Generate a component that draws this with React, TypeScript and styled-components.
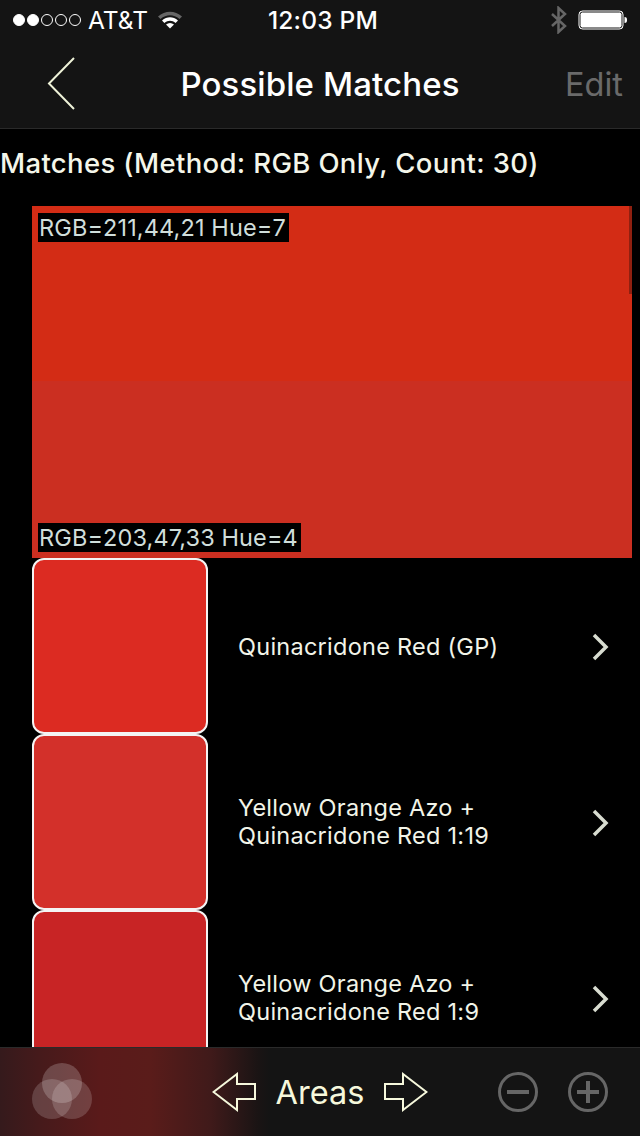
import React from "react";
import styled, { createGlobalStyle } from "styled-components";

const Global = createGlobalStyle`
  html, body { margin: 0; padding: 0; background: #000; }
  body { font-family: Inter, "Liberation Sans", sans-serif; }
`;

const Screen = styled.div`
  width: 640px; height: 1136px; background: #000; display: flex; flex-direction: column; overflow: hidden;
`;
const Header = styled.header`
  height: 128px; flex: none; background: #141414; border-bottom: 1px solid #2a2a2a; display: flex; flex-direction: column;
`;
const StatusBar = styled.div`
  height: 40px; display: grid; grid-template-columns: 1fr auto 1fr; align-items: center; padding: 0 12px 0 13px; color: #fff; font-size: 24.5px;
`;
const StatusLeft = styled.div`display: flex; align-items: center; gap: 7px;`;
const StatusRight = styled.div`display: flex; align-items: center; justify-content: flex-end; gap: 10px;`;
const Dots = styled.div`display: flex; gap: 2px;`;
const Dot = styled.span<{ $on?: boolean }>`
  width: 12px; height: 12px; border-radius: 50%; box-sizing: border-box; border: 1px solid #fff; background: ${p => p.$on ? "#fff" : "transparent"};
`;
const Time = styled.div`font-weight: 500; letter-spacing: 0.2px; margin-left: 5px;`;
const NavBar = styled.nav`
  flex: 1; display: grid; grid-template-columns: 120px 1fr 120px; align-items: center; padding-bottom: 1px;
`;
const BackButton = styled.div`padding-left: 46px; display: flex; align-items: center;`;
const Title = styled.h1`margin: 0; text-align: center; color: #fff; font-size: 33px; font-weight: 500; letter-spacing: 0.1px; white-space: nowrap;`;
const Edit = styled.div`text-align: right; padding: 2px 17px 0 0; color: #6a6a6a; font-size: 32.5px;`;
const Content = styled.main`flex: 1; min-height: 0; overflow: hidden; display: flex; flex-direction: column;`;
const SectionTitle = styled.h2`
  flex: none; margin: 0; height: 77px; box-sizing: border-box; padding: 17px 0 0 0; color: #f4f6ea; font-size: 27.5px; line-height: 34px; font-weight: 500; letter-spacing: 0.35px; white-space: nowrap;
`;
const Comparison = styled.section`
  flex: none; width: 600px; height: 352px; margin-left: 32px; display: flex; flex-direction: column; position: relative;
`;
const Band = styled.div<{ $color: string; $h: number; $end?: boolean }>`
  height: ${p => p.$h}px; background: ${p => p.$color}; box-sizing: border-box; display: flex; padding: ${p => p.$end ? "0 0 6px 6px" : "7px 0 0 6px"};
  align-items: ${p => p.$end ? "flex-end" : "flex-start"};
`;
const ScrollIndicator = styled.div`
  position: absolute; top: 0; right: 0; width: 3px; height: 88px; background: #8f2010;
`;
const Label = styled.span`
  background: #000; color: #d0dedb; font-size: 23.5px; line-height: 29px; padding: 0 3px 0 1px; height: 29px; white-space: nowrap;
  letter-spacing: 0.12px; box-sizing: border-box;
`;
const Row = styled.article`
  flex: none; height: 176px; display: flex; align-items: center; margin-left: 32px; width: 608px;
`;
const Swatch = styled.div<{ $color: string }>`
  width: 176px; height: 176px; box-sizing: border-box; flex: none; background: ${p => p.$color}; border: 2px solid #f4f4f4; border-radius: 12px;
`;
const RowText = styled.div`
  flex: 1; padding: 2px 0 0 30px; color: #f2f4e8; font-size: 23.5px; line-height: 28px; letter-spacing: 0.26px;
`;
const TwoLine = styled(RowText)`
  padding-top: 0;
`;
const Chevron = styled.div`flex: none; width: 24px; margin: 2px 28px 0 0; display: flex; justify-content: center;`;
const TabBar = styled.footer`
  height: 89px; flex: none; box-sizing: border-box; border-top: 1px solid #2a2a2a; display: grid; grid-template-columns: 208px 224px 1fr; align-items: center;
  background: linear-gradient(90deg, #351a1c 0, #461a1b 40px, #5a1a1a 100px, #5a1c1a 150px, #401a1a 210px, #1a1414 258px, #141414 270px);
`;
const Logo = styled.div`padding-left: 32px; display: flex; align-items: center; padding-bottom: 3px;`;
const AreaNav = styled.div`display: flex; align-items: center; justify-content: space-between; padding: 0 4px 0 4px; height: 100%;`;
const AreaLabel = styled.span`color: #f6f8dc; font-size: 32.5px; font-weight: 400;`;
const Zoomers = styled.div`display: flex; gap: 30px; padding-left: 66px;`;

const Chev = () => (
  <svg width="18" height="28" viewBox="0 0 18 28"><path d="M3 2 L15 14 L3 26" fill="none" stroke="#d8dcd0" strokeWidth="3.5" /></svg>
);
const Arrow = ({ flip }: { flip?: boolean }) => (
  <svg width="44" height="40" viewBox="0 0 44 40" style={flip ? { transform: "scaleX(-1)" } : undefined}>
    <path d="M1.5 20 L25 2 V12 H43 V27 H25 V38 Z" fill="none" stroke="#f6f8dc" strokeWidth="2" />
  </svg>
);
const RoundBtn = ({ plus }: { plus?: boolean }) => (
  <svg width="40" height="40" viewBox="0 0 40 40">
    <circle cx="20" cy="20" r="18.5" fill="none" stroke="#666" strokeWidth="3" />
    <path d={plus ? "M9 20 H31 M20 9 V31" : "M9 20 H31"} stroke="#666" strokeWidth="4" fill="none" />
  </svg>
);

export default function App() {
  return (
    <Screen>
      <Global />
      <Header>
        <StatusBar>
          <StatusLeft>
            <Dots><Dot $on /><Dot $on /><Dot /><Dot /><Dot /></Dots>
            <span>AT&amp;T</span>
            <svg width="26" height="20" viewBox="0 0 26 20" style={{ marginLeft: 2 }}>
              <path d="M1 6.5 C8 0 18 0 25 6.5 L22.5 9 C16.5 4 9.5 4 3.5 9 Z" fill="#666" />
              <path d="M5 10.5 C10 6.2 16 6.2 21 10.5 L18.6 13 C15 10 11 10 7.4 13 Z" fill="#fff" />
              <path d="M9 14.5 C11.5 12.5 14.5 12.5 17 14.5 L13 18.5 Z" fill="#fff" />
            </svg>
          </StatusLeft>
          <Time>12:03 PM</Time>
          <StatusRight>
            <svg width="18" height="28" viewBox="0 0 18 28">
              <path d="M2 8 L15 20 L8.5 26 V2 L15 8 L2 20" fill="none" stroke="#666" strokeWidth="2.5" />
            </svg>
            <svg width="50" height="20" viewBox="0 0 50 20">
              <rect x="1" y="1" width="44" height="18" rx="3.5" fill="#fff" stroke="#fff" strokeWidth="1" />
              <rect x="2" y="2" width="42" height="16" rx="2.5" fill="#fff" stroke="#141414" strokeWidth="1" />
              <path d="M46.5 7 C48.5 7 49 8 49 10 C49 12 48.5 13 46.5 13 Z" fill="#fff" />
            </svg>
          </StatusRight>
        </StatusBar>
        <NavBar>
          <BackButton>
            <svg width="30" height="54" viewBox="0 0 30 54"><path d="M28 1 L3 26.5 L28 52" fill="none" stroke="#eef2d8" strokeWidth="2" /></svg>
          </BackButton>
          <Title>Possible Matches</Title>
          <Edit>Edit</Edit>
        </NavBar>
      </Header>
      <Content>
        <SectionTitle>Matches (Method: RGB Only, Count: 30)</SectionTitle>
        <Comparison>
          <Band $color="#d32c15" $h={175}>
            <Label>RGB=211,44,21 Hue=7</Label>
          </Band>
          <Band $color="#cb2f21" $h={177} $end>
            <Label>RGB=203,47,33 Hue=4</Label>
          </Band>
          <ScrollIndicator />
        </Comparison>
        <Row>
          <Swatch $color="#dc2b22" />
          <RowText>Quinacridone Red (GP)</RowText>
          <Chevron><Chev /></Chevron>
        </Row>
        <Row>
          <Swatch $color="#d3302a" />
          <TwoLine>Yellow Orange Azo +<br />Quinacridone Red 1:19</TwoLine>
          <Chevron><Chev /></Chevron>
        </Row>
        <Row>
          <Swatch $color="#c82425" />
          <TwoLine>Yellow Orange Azo +<br />Quinacridone Red 1:9</TwoLine>
          <Chevron><Chev /></Chevron>
        </Row>
      </Content>
      <TabBar>
        <Logo>
          <svg width="60" height="56" viewBox="0 0 60 56">
            <circle cx="20" cy="36" r="20" fill="#fff" fillOpacity="0.17" />
            <circle cx="40" cy="36" r="20" fill="#fff" fillOpacity="0.17" />
            <circle cx="30" cy="20" r="20" fill="#fff" fillOpacity="0.2" />
          </svg>
        </Logo>
        <AreaNav>
          <Arrow />
          <AreaLabel>Areas</AreaLabel>
          <Arrow flip />
        </AreaNav>
        <Zoomers>
          <RoundBtn />
          <RoundBtn plus />
        </Zoomers>
      </TabBar>
    </Screen>
  );
}
